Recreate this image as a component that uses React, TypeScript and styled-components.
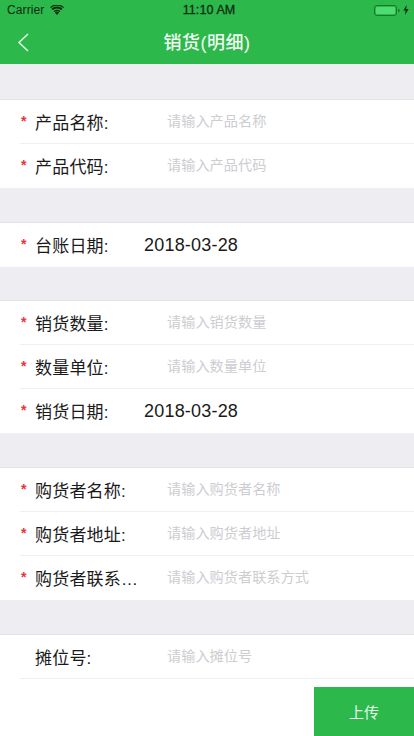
import styled, { createGlobalStyle } from 'styled-components';

const GlobalStyle = createGlobalStyle`
  html, body {
    margin: 0;
    padding: 0;
    background: #fff;
    font-family: "Liberation Sans", "Noto Sans CJK SC", sans-serif;
  }
`;

const Page = styled.div`
  position: relative;
  width: 414px;
  height: 736px;
  overflow: hidden;
  background: #fff;
`;

const Header = styled.header`
  background: #2cb84a;
  height: 64px;
`;

const StatusBar = styled.div`
  height: 20px;
  padding: 0 5px 0 7px;
  display: grid;
  grid-template-columns: 1fr auto 1fr;
  align-items: center;
  font-size: 12px;
  letter-spacing: 0.1px;
  color: #0c2c14;
`;

const Carrier = styled.div`
  display: flex;
  align-items: center;
  gap: 6px;
`;

const Clock = styled.div`
  margin-left: 2px;
  font-size: 12.5px;
  -webkit-text-stroke: 0.3px #0c2c14;
`;

const Power = styled.div`
  display: flex;
  justify-content: flex-end;
  align-items: center;
  gap: 3px;
`;

const NavBar = styled.div`
  height: 44px;
  position: relative;
  display: flex;
  align-items: center;
  justify-content: center;
`;

const Back = styled.svg`
  position: absolute;
  left: 17px;
  top: 13px;
`;

const Title = styled.h1`
  margin: 0;
  padding-bottom: 2px;
  color: #f2fbf4;
  font-size: 18px;
  font-weight: 500;
  letter-spacing: 0.5px;
`;

const Gap = styled.div<{ $height: number }>`
  height: ${(p) => p.$height}px;
  box-sizing: border-box;
  background: #eeeef2;
  border-bottom: 1px solid #e3e3e6;
`;

const Group = styled.section`
  background: #fff;
`;

const Row = styled.div<{ $last?: boolean }>`
  height: 44px;
  box-sizing: border-box;
  margin-left: 20px;
  display: flex;
  align-items: center;
  border-bottom: 1px solid ${(p) => (p.$last ? 'transparent' : '#efeff1')};
`;

const Star = styled.span`
  width: 15px;
  box-sizing: border-box;
  padding: 0 0 2px 1px;
  color: #e8323c;
  font-size: 14px;
  font-weight: 700;
  line-height: 1;
  flex: none;
`;

const Label = styled.div`
  width: 109px;
  flex: none;
  font-size: 17px;
  color: #1a1a1a;
  letter-spacing: 0.2px;
  white-space: nowrap;
`;

const Placeholder = styled.div`
  margin-left: 23px;
  font-size: 14.2px;
  color: #cdcdd1;
  padding-bottom: 3px;
`;

const Value = styled.div`
  padding-top: 2px;
  font-size: 18px;
  color: #1a1a1a;
  letter-spacing: 0.2px;
`;

const Upload = styled.button`
  position: absolute;
  right: 0;
  bottom: 0;
  width: 100px;
  height: 49px;
  border: none;
  padding: 0;
  background: #2cb84a;
  color: #e8f8ec;
  font: inherit;
  font-size: 15px;
`;

type Field = { label: string; hint?: string; value?: string; required?: boolean };

const groups: { gap: number; fields: Field[] }[] = [
  {
    gap: 36,
    fields: [
      { label: '产品名称:', hint: '请输入产品名称', required: true },
      { label: '产品代码:', hint: '请输入产品代码', required: true },
    ],
  },
  { gap: 35, fields: [{ label: '台账日期:', value: '2018-03-28', required: true }] },
  {
    gap: 34,
    fields: [
      { label: '销货数量:', hint: '请输入销货数量', required: true },
      { label: '数量单位:', hint: '请输入数量单位', required: true },
      { label: '销货日期:', value: '2018-03-28', required: true },
    ],
  },
  {
    gap: 35,
    fields: [
      { label: '购货者名称:', hint: '请输入购货者名称', required: true },
      { label: '购货者地址:', hint: '请输入购货者地址', required: true },
      { label: '购货者联系…', hint: '请输入购货者联系方式', required: true },
    ],
  },
];

const FieldRow = ({ field, last }: { field: Field; last?: boolean }) => (
  <Row $last={last}>
    <Star>{field.required ? '*' : ''}</Star>
    <Label>{field.label}</Label>
    {field.value ? <Value>{field.value}</Value> : <Placeholder>{field.hint}</Placeholder>}
  </Row>
);

export default function App() {
  return (
    <Page>
      <GlobalStyle />
      <Header>
        <StatusBar>
          <Carrier>
            Carrier
            <svg width="14" height="10" viewBox="0 0 14 10">
              <path d="M7 10 L4.8 7.4 A3.4 3.4 0 0 1 9.2 7.4 Z" fill="#0c2c14" />
              <path d="M3.6 6.1 A5.2 5.2 0 0 1 10.4 6.1 L9.5 7 A4 4 0 0 0 4.5 7 Z" fill="#0c2c14" />
              <path d="M1.4 3.7 A8.2 8.2 0 0 1 12.6 3.7 L11.2 5.1 A6.2 6.2 0 0 0 2.8 5.1 Z" fill="#0c2c14" />
              <path d="M0 2.2 A10 10 0 0 1 14 2.2 L13.1 3.1 A8.8 8.8 0 0 0 0.9 3.1 Z" fill="#0c2c14" />
            </svg>
          </Carrier>
          <Clock>11:10 AM</Clock>
          <Power>
            <svg width="26" height="11" viewBox="0 0 26 11">
              <rect x="0.5" y="0.5" width="22" height="10" rx="2.5" fill="none" stroke="#17792f" />
              <rect x="2" y="2" width="19" height="7" rx="1" fill="#4fdc6e" />
              <rect x="24" y="4" width="1.5" height="3" fill="#17792f" />
            </svg>
            <svg width="6" height="10" viewBox="0 0 6 10">
              <path d="M3.6 0 L0.4 5.6 H2.6 L2 10 L5.6 4 H3.2 Z" fill="#0c2c14" />
            </svg>
          </Power>
        </StatusBar>
        <NavBar>
          <Back width="12" height="20" viewBox="0 0 12 20">
            <path d="M11 1 L2 9.5 L11 18" fill="none" stroke="#e8f8ec" strokeWidth="1.5" />
          </Back>
          <Title>销货(明细)</Title>
        </NavBar>
      </Header>
      {groups.map((group) => (
        <div key={group.fields[0].label}>
          <Gap $height={group.gap} />
          <Group>
            {group.fields.map((field, j) => (
              <FieldRow key={field.label} field={field} last={j === group.fields.length - 1} />
            ))}
          </Group>
        </div>
      ))}
      <Gap $height={35} />
      <Group>
        <FieldRow field={{ label: '摊位号:', hint: '请输入摊位号' }} />
      </Group>
      <Upload>上传</Upload>
    </Page>
  );
}
